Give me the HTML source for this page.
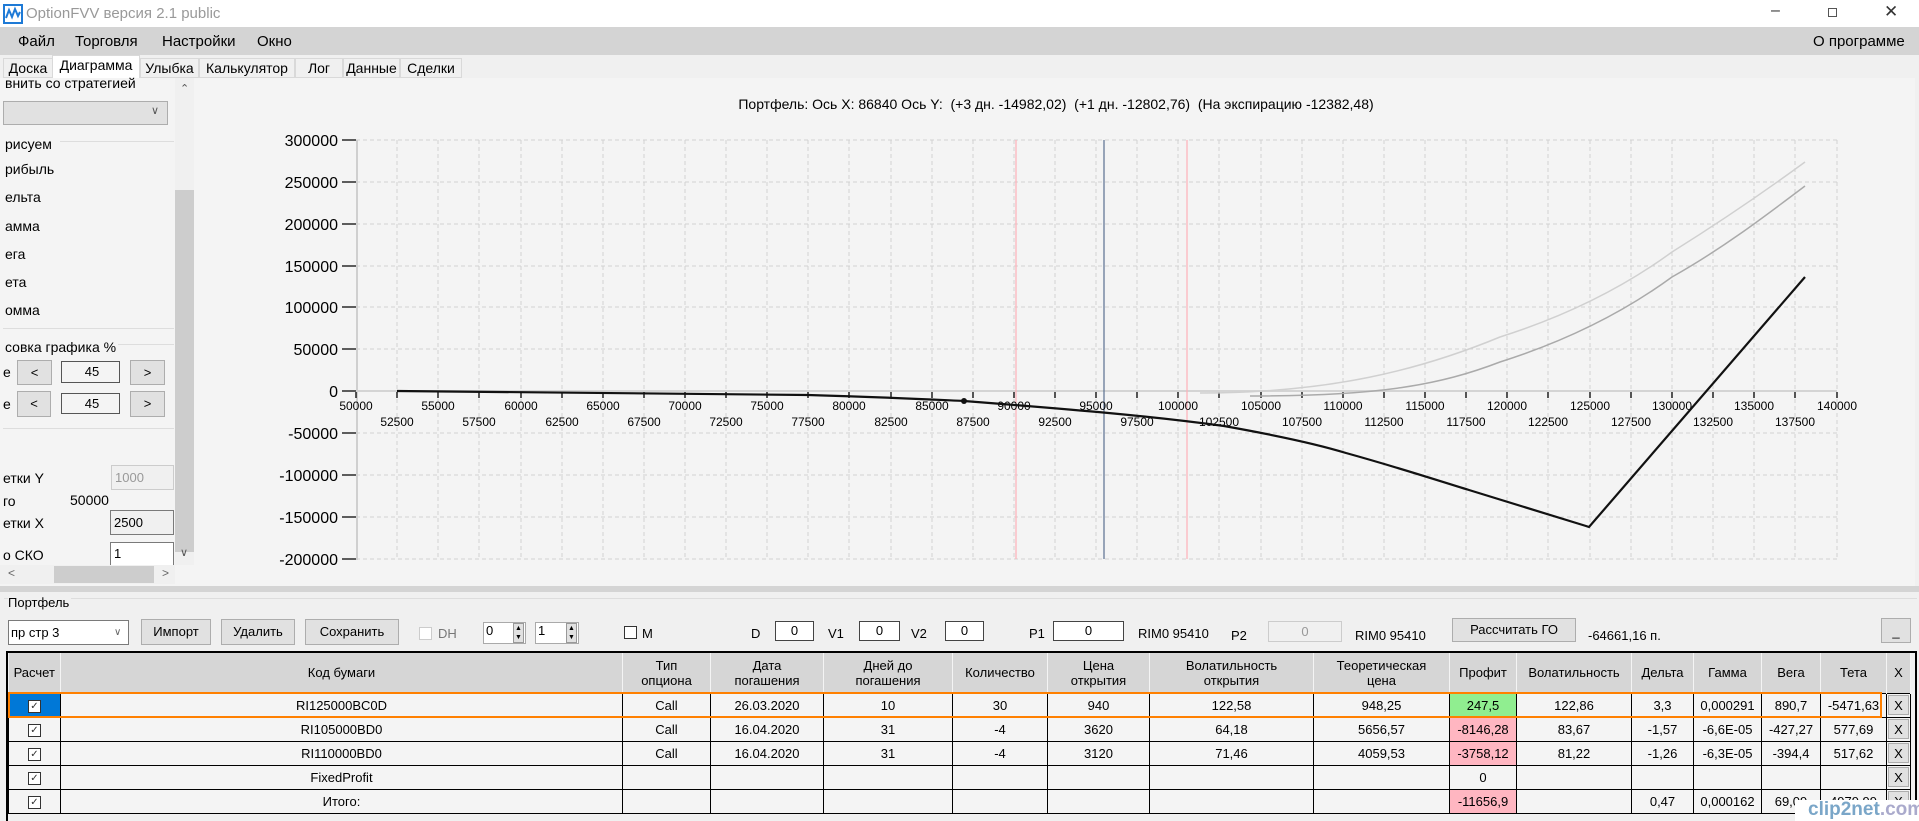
<!DOCTYPE html>
<html><head><meta charset="utf-8"><style>
*{box-sizing:border-box;margin:0;padding:0}
body{width:1919px;height:821px;overflow:hidden;background:#f0f0f0;font-family:"Liberation Sans",sans-serif;font-size:13px;color:#000;position:relative}
.a{position:absolute;white-space:nowrap}
.btn{position:absolute;background:#e1e1e1;border:1px solid #adadad;text-align:center;font-size:13px}
.box{position:absolute;background:#fff;border:1px solid #7a7a7a;font-size:13px;padding-left:3px}
table{position:absolute;left:8px;top:653px;border-collapse:collapse;table-layout:fixed;font-size:13px}
td{border:1px solid #000;text-align:center;height:24px;background:#f4f4f4;overflow:hidden;white-space:nowrap}
th{background:#d6d6d6;font-weight:normal;border-right:1px solid #f4f4f4;height:40px;line-height:15px;font-size:13px}
.cb{display:inline-block;width:13px;height:13px;border:1px solid #333;background:#fff;font-size:10px;line-height:11px;color:#333}
.g{background:#90ee90}.p{background:#ffb6c1}
.x{background:#e1e1e1;border:1px solid #adadad;display:block;margin:1px;height:20px;line-height:20px}
.tab{position:absolute;top:58px;height:20px;border:1px solid #d9d9d9;background:#f0f0f0;text-align:center;line-height:19px;font-size:14px}
</style></head><body>
<div class="a" style="left:0;top:0;width:1919px;height:27px;background:#fff"></div>
<svg class="a" style="left:3px;top:4px" width="20" height="20" viewBox="0 0 20 20"><rect x="1" y="1" width="18" height="18" fill="none" stroke="#1e7ad6" stroke-width="2"/><path d="M3 14 L6 6 L9 13 L12 5 L15 12 L17 8" fill="none" stroke="#1e7ad6" stroke-width="2"/></svg>
<div class="a" style="left:26px;top:5px;font-size:15px;color:#999">OptionFVV версия 2.1 public</div>
<div class="a" style="left:1771px;top:2px;font-size:16px;color:#333">&#8211;</div>
<div class="a" style="left:1828px;top:8px;width:9px;height:9px;border:1px solid #555"></div>
<div class="a" style="left:1884px;top:2px;font-size:17px;color:#333">&#10005;</div>
<div class="a" style="left:0;top:27px;width:1919px;height:28px;background:#d4d4d4"></div>
<div class="a" style="left:18px;top:33px;font-size:15px">Файл</div>
<div class="a" style="left:75px;top:33px;font-size:15px">Торговля</div>
<div class="a" style="left:162px;top:33px;font-size:15px">Настройки</div>
<div class="a" style="left:257px;top:33px;font-size:15px">Окно</div>
<div class="a" style="left:1813px;top:33px;font-size:15px">О программе</div>
<div class="tab" style="left:3px;width:50px">Доска</div>
<div class="tab" style="left:52px;width:88px;top:55px;height:24px;background:#fff;border-bottom:none">Диаграмма</div>
<div class="tab" style="left:140px;width:59px">Улыбка</div>
<div class="tab" style="left:199px;width:96px">Калькулятор</div>
<div class="tab" style="left:295px;width:48px">Лог</div>
<div class="tab" style="left:343px;width:57px">Данные</div>
<div class="tab" style="left:400px;width:62px">Сделки</div>
<div class="a" style="left:0;top:78px;width:194px;height:508px;background:#f4f4f4"></div>
<div class="a" style="left:175px;top:78px;width:19px;height:487px;background:#f0f0f0"></div>
<div class="a" style="left:175px;top:190px;width:19px;height:362px;background:#cdcdcd"></div>
<div class="a" style="left:180px;top:82px;font-size:11px;color:#555">&#8963;</div>
<div class="a" style="left:5px;top:75px;font-size:14px">внить со стратегией</div>
<div class="a" style="left:3px;top:101px;width:165px;height:24px;background:#e1e1e1;border:1px solid #adadad"></div>
<div class="a" style="left:151px;top:104px;font-size:11px;color:#555">&#8744;</div>
<div class="a" style="left:60px;top:141px;width:114px;height:1px;background:#ddd"></div>
<div class="a" style="left:5px;top:136px;font-size:14px">рисуем</div>
<div class="a" style="left:5px;top:161px;font-size:14px">рибыль</div>
<div class="a" style="left:5px;top:189px;font-size:14px">ельта</div>
<div class="a" style="left:5px;top:218px;font-size:14px">амма</div>
<div class="a" style="left:5px;top:246px;font-size:14px">ега</div>
<div class="a" style="left:5px;top:274px;font-size:14px">ета</div>
<div class="a" style="left:5px;top:302px;font-size:14px">омма</div>
<div class="a" style="left:3px;top:328px;width:171px;height:1px;background:#ddd"></div>
<div class="a" style="left:5px;top:339px;font-size:14px">совка графика %</div>
<div class="a" style="left:118px;top:344px;width:56px;height:1px;background:#ddd"></div>
<div class="a" style="left:3px;top:364px;font-size:14px">е</div>
<div class="btn" style="left:17px;top:360px;width:35px;height:25px;line-height:23px">&lt;</div>
<div class="box" style="left:61px;top:361px;width:59px;height:22px;text-align:center;line-height:20px;background:#f4f4f4;border-color:#555">45</div>
<div class="btn" style="left:130px;top:360px;width:35px;height:25px;line-height:23px">&gt;</div>
<div class="a" style="left:3px;top:396px;font-size:14px">е</div>
<div class="btn" style="left:17px;top:391px;width:34px;height:26px;line-height:24px">&lt;</div>
<div class="box" style="left:61px;top:393px;width:59px;height:21px;text-align:center;line-height:19px;background:#f4f4f4;border-color:#555">45</div>
<div class="btn" style="left:130px;top:391px;width:35px;height:26px;line-height:24px">&gt;</div>
<div class="a" style="left:3px;top:428px;width:171px;height:1px;background:#ddd"></div>
<div class="a" style="left:3px;top:470px;font-size:14px">етки Y</div>
<div class="box" style="left:111px;top:465px;width:63px;height:25px;line-height:23px;color:#999;border-color:#ccc;background:#f0f0f0">1000</div>
<div class="a" style="left:3px;top:493px;font-size:14px">го</div>
<div class="a" style="left:70px;top:492px;font-size:14px">50000</div>
<div class="a" style="left:3px;top:515px;font-size:14px">етки X</div>
<div class="box" style="left:110px;top:510px;width:64px;height:25px;line-height:23px;background:#f0f0f0">2500</div>
<div class="a" style="left:3px;top:547px;font-size:14px">о СКО</div>
<div class="box" style="left:110px;top:542px;width:64px;height:24px;line-height:22px">1</div>
<div class="a" style="left:180px;top:546px;font-size:11px;color:#555">&#8744;</div>
<div class="a" style="left:0;top:565px;width:175px;height:19px;background:#f0f0f0"></div>
<div class="a" style="left:54px;top:566px;width:100px;height:17px;background:#cdcdcd"></div>
<div class="a" style="left:8px;top:566px;font-size:12px;color:#666">&lt;</div>
<div class="a" style="left:162px;top:566px;font-size:12px;color:#666">&gt;</div>
<svg class="a" style="left:0;top:0" width="1919" height="821">
<rect x="194" y="78" width="1721" height="508" fill="#f4f4f4"/>
<g stroke="#d2d2d2" stroke-width="1" stroke-dasharray="4,3" fill="none">
<path d="M356 140H1837M356 182H1837M356 224H1837M356 266H1837M356 307H1837M356 349H1837M356 433H1837M356 475H1837M356 517H1837M356 559H1837"/>
</g>
<g stroke="#d2d2d2" stroke-width="1" stroke-dasharray="4,3">
<line x1="397" y1="140" x2="397" y2="559"/><line x1="438" y1="140" x2="438" y2="559"/><line x1="479" y1="140" x2="479" y2="559"/><line x1="521" y1="140" x2="521" y2="559"/><line x1="562" y1="140" x2="562" y2="559"/><line x1="603" y1="140" x2="603" y2="559"/><line x1="644" y1="140" x2="644" y2="559"/><line x1="685" y1="140" x2="685" y2="559"/><line x1="726" y1="140" x2="726" y2="559"/><line x1="767" y1="140" x2="767" y2="559"/><line x1="808" y1="140" x2="808" y2="559"/><line x1="849" y1="140" x2="849" y2="559"/><line x1="891" y1="140" x2="891" y2="559"/><line x1="932" y1="140" x2="932" y2="559"/><line x1="973" y1="140" x2="973" y2="559"/><line x1="1014" y1="140" x2="1014" y2="559"/><line x1="1055" y1="140" x2="1055" y2="559"/><line x1="1096" y1="140" x2="1096" y2="559"/><line x1="1137" y1="140" x2="1137" y2="559"/><line x1="1178" y1="140" x2="1178" y2="559"/><line x1="1219" y1="140" x2="1219" y2="559"/><line x1="1261" y1="140" x2="1261" y2="559"/><line x1="1302" y1="140" x2="1302" y2="559"/><line x1="1343" y1="140" x2="1343" y2="559"/><line x1="1384" y1="140" x2="1384" y2="559"/><line x1="1425" y1="140" x2="1425" y2="559"/><line x1="1466" y1="140" x2="1466" y2="559"/><line x1="1507" y1="140" x2="1507" y2="559"/><line x1="1548" y1="140" x2="1548" y2="559"/><line x1="1590" y1="140" x2="1590" y2="559"/><line x1="1631" y1="140" x2="1631" y2="559"/><line x1="1672" y1="140" x2="1672" y2="559"/><line x1="1713" y1="140" x2="1713" y2="559"/><line x1="1754" y1="140" x2="1754" y2="559"/><line x1="1795" y1="140" x2="1795" y2="559"/><line x1="1837" y1="140" x2="1837" y2="559"/>
</g>
<line x1="357" y1="140" x2="357" y2="560" stroke="#cfcfcf" stroke-width="2"/>
<line x1="356" y1="391" x2="1837" y2="391" stroke="#d4d4d4" stroke-width="2"/>
<g stroke="#000" stroke-width="1.3">
<path d="M342 140h14M342 182h14M342 224h14M342 266h14M342 307h14M342 349h14M342 391h14M342 433h14M342 475h14M342 517h14M342 559h14"/>
<path d="M356 392v6M397 392v6M438 392v6M479 392v6M521 392v6M562 392v6M603 392v6M644 392v6M685 392v6M726 392v6M767 392v6M808 392v6M849 392v6M891 392v6M932 392v6M973 392v6M1014 392v6M1055 392v6M1096 392v6M1137 392v6M1178 392v6M1219 392v6M1261 392v6M1302 392v6M1343 392v6M1384 392v6M1425 392v6M1466 392v6M1507 392v6M1548 392v6M1590 392v6M1631 392v6M1672 392v6M1713 392v6M1754 392v6M1795 392v6M1837 392v6"/>
</g>
<line x1="1016" y1="140" x2="1016" y2="559" stroke="#ffb0b8" stroke-width="1.2"/>
<line x1="1187" y1="140" x2="1187" y2="559" stroke="#ffb0b8" stroke-width="1.2"/>
<line x1="1104" y1="140" x2="1104" y2="559" stroke="#5a7090" stroke-width="1.2"/>
<g font-family="Liberation Sans" font-size="16" text-anchor="end" fill="#000">
<text x="338" y="146">300000</text><text x="338" y="188">250000</text><text x="338" y="230">200000</text><text x="338" y="272">150000</text><text x="338" y="313">100000</text><text x="338" y="355">50000</text><text x="338" y="397">0</text><text x="338" y="439">-50000</text><text x="338" y="481">-100000</text><text x="338" y="523">-150000</text><text x="338" y="565">-200000</text>
</g>
<g font-family="Liberation Sans" font-size="12" text-anchor="middle" fill="#000">
<text x="356" y="410">50000</text><text x="438" y="410">55000</text><text x="521" y="410">60000</text><text x="603" y="410">65000</text><text x="685" y="410">70000</text><text x="767" y="410">75000</text><text x="849" y="410">80000</text><text x="932" y="410">85000</text><text x="1014" y="410">90000</text><text x="1096" y="410">95000</text><text x="1178" y="410">100000</text><text x="1261" y="410">105000</text><text x="1343" y="410">110000</text><text x="1425" y="410">115000</text><text x="1507" y="410">120000</text><text x="1590" y="410">125000</text><text x="1672" y="410">130000</text><text x="1754" y="410">135000</text><text x="1837" y="410">140000</text>
<text x="397" y="426">52500</text><text x="479" y="426">57500</text><text x="562" y="426">62500</text><text x="644" y="426">67500</text><text x="726" y="426">72500</text><text x="808" y="426">77500</text><text x="891" y="426">82500</text><text x="973" y="426">87500</text><text x="1055" y="426">92500</text><text x="1137" y="426">97500</text><text x="1219" y="426">102500</text><text x="1302" y="426">107500</text><text x="1384" y="426">112500</text><text x="1466" y="426">117500</text><text x="1548" y="426">122500</text><text x="1631" y="426">127500</text><text x="1713" y="426">132500</text><text x="1795" y="426">137500</text>
</g>
<path d="M1200 393 C1330 393 1420 370 1500 337 C1560 318 1620 290 1672 252 C1720 222 1760 195 1805 162" fill="none" stroke="#d0d0d0" stroke-width="1.5"/>
<path d="M1250 396 C1380 396 1440 385 1500 362 C1560 343 1620 315 1672 277 C1720 250 1760 220 1805 186" fill="none" stroke="#aaa" stroke-width="1.5"/>
<path d="M397 391 L808 395 C880 397 920 399 964 401 C1080 410 1150 416 1224 426 C1280 436 1320 445 1346 453 C1400 468 1430 478 1469 490 L1586 526 L1589 527 L1805 277" fill="none" stroke="#111" stroke-width="2.2"/>
<circle cx="964" cy="401" r="3" fill="#111"/>
<text x="1056" y="109" font-family="Liberation Sans" font-size="14" text-anchor="middle" xml:space="preserve">Портфель: Ось X: 86840 Ось Y:  (+3 дн. -14982,02)  (+1 дн. -12802,76)  (На экспирацию -12382,48)</text>
</svg>
<div class="a" style="left:0;top:586px;width:1919px;height:6px;background:#d4d4d4"></div>
<div class="a" style="left:4px;top:598px;width:1913px;height:1px;background:#ddd"></div>
<div class="a" style="left:8px;top:595px;font-size:13px;background:#f0f0f0;padding-right:2px">Портфель</div>
<div class="a" style="left:8px;top:620px;width:121px;height:25px;background:#fff;border:1px solid #7a7a7a;line-height:23px;padding-left:2px">пр стр 3<span style="position:absolute;left:105px;font-size:10px;color:#666">&#8744;</span></div>
<div class="btn" style="left:141px;top:619px;width:70px;height:26px;line-height:24px">Импорт</div>
<div class="btn" style="left:221px;top:619px;width:74px;height:26px;line-height:24px">Удалить</div>
<div class="btn" style="left:305px;top:619px;width:94px;height:26px;line-height:24px">Сохранить</div>
<div class="a" style="left:419px;top:627px;width:13px;height:13px;border:1px solid #ccc;background:#fff"></div>
<div class="a" style="left:438px;top:626px;color:#777">DH</div>
<div class="a" style="left:483px;top:622px;width:43px;height:22px;border:1px solid #aaa;background:#fff;padding-left:2px">0</div>
<div class="a" style="left:513px;top:623px;width:11px;height:20px;background:#e1e1e1;border:1px solid #999;font-size:7px;line-height:9px;text-align:center">▲<br>▼</div>
<div class="a" style="left:535px;top:622px;width:44px;height:22px;border:1px solid #aaa;background:#fff;padding-left:2px">1</div>
<div class="a" style="left:566px;top:623px;width:11px;height:20px;background:#e1e1e1;border:1px solid #999;font-size:7px;line-height:9px;text-align:center">▲<br>▼</div>
<div class="a" style="left:624px;top:626px;width:13px;height:13px;border:1px solid #333;background:#fff"></div>
<div class="a" style="left:642px;top:626px">M</div>
<div class="a" style="left:751px;top:626px">D</div>
<div class="box" style="left:775px;top:621px;width:39px;height:20px;text-align:center;line-height:18px;border-color:#444;padding:0">0</div>
<div class="a" style="left:828px;top:626px">V1</div>
<div class="box" style="left:859px;top:621px;width:41px;height:20px;text-align:center;line-height:18px;border-color:#444;padding:0">0</div>
<div class="a" style="left:911px;top:626px">V2</div>
<div class="box" style="left:945px;top:621px;width:39px;height:20px;text-align:center;line-height:18px;border-color:#444;padding:0">0</div>
<div class="a" style="left:1029px;top:626px">P1</div>
<div class="box" style="left:1053px;top:621px;width:71px;height:20px;text-align:center;line-height:18px;border-color:#444;padding:0">0</div>
<div class="a" style="left:1138px;top:626px">RIM0 95410</div>
<div class="a" style="left:1231px;top:628px">P2</div>
<div class="box" style="left:1268px;top:621px;width:74px;height:21px;text-align:center;line-height:19px;border-color:#ccc;color:#999;background:#f0f0f0;padding:0">0</div>
<div class="a" style="left:1355px;top:628px">RIM0 95410</div>
<div class="btn" style="left:1452px;top:618px;width:124px;height:24px;line-height:22px">Рассчитать ГО</div>
<div class="a" style="left:1588px;top:628px">-64661,16 п.</div>
<div class="btn" style="left:1881px;top:618px;width:30px;height:25px;line-height:26px">_</div>
<div class="a" style="left:6px;top:651px;width:1911px;height:170px;border:2px solid #000;border-bottom:none;background:#f0f0f0"></div>
<table>
<colgroup><col style="width:52px"><col style="width:562px"><col style="width:88px"><col style="width:113px"><col style="width:129px"><col style="width:95px"><col style="width:102px"><col style="width:164px"><col style="width:136px"><col style="width:67px"><col style="width:115px"><col style="width:62px"><col style="width:68px"><col style="width:59px"><col style="width:66px"><col style="width:24px"></colgroup>
<tr><th>Расчет</th><th>Код бумаги</th><th>Тип<br>опциона</th><th>Дата<br>погашения</th><th>Дней до<br>погашения</th><th>Количество</th><th>Цена<br>открытия</th><th>Волатильность<br>открытия</th><th>Теоретическая<br>цена</th><th>Профит</th><th>Волатильность</th><th>Дельта</th><th>Гамма</th><th>Вега</th><th>Тета</th><th>X</th></tr>
<tr><td style="background:#0078d7"><span class="cb">✓</span></td><td>RI125000BC0D</td><td>Call</td><td>26.03.2020</td><td>10</td><td>30</td><td>940</td><td>122,58</td><td>948,25</td><td class="g">247,5</td><td>122,86</td><td>3,3</td><td>0,000291</td><td>890,7</td><td>-5471,63</td><td style="padding:0"><span class="x">X</span></td></tr>
<tr><td><span class="cb">✓</span></td><td>RI105000BD0</td><td>Call</td><td>16.04.2020</td><td>31</td><td>-4</td><td>3620</td><td>64,18</td><td>5656,57</td><td class="p">-8146,28</td><td>83,67</td><td>-1,57</td><td>-6,6E-05</td><td>-427,27</td><td>577,69</td><td style="padding:0"><span class="x">X</span></td></tr>
<tr><td><span class="cb">✓</span></td><td>RI110000BD0</td><td>Call</td><td>16.04.2020</td><td>31</td><td>-4</td><td>3120</td><td>71,46</td><td>4059,53</td><td class="p">-3758,12</td><td>81,22</td><td>-1,26</td><td>-6,3E-05</td><td>-394,4</td><td>517,62</td><td style="padding:0"><span class="x">X</span></td></tr>
<tr><td><span class="cb">✓</span></td><td>FixedProfit</td><td></td><td></td><td></td><td></td><td></td><td></td><td></td><td>0</td><td></td><td></td><td></td><td></td><td></td><td style="padding:0"><span class="x">X</span></td></tr>
<tr><td><span class="cb">✓</span></td><td>Итого:</td><td></td><td></td><td></td><td></td><td></td><td></td><td></td><td class="p">-11656,9</td><td></td><td>0,47</td><td>0,000162</td><td>69,09</td><td>4979,99</td><td style="padding:0"><span class="x">X</span></td></tr>
</table>
<div class="a" style="left:8px;top:692px;width:1874px;height:26px;border:2px solid #ff8000"></div>
<div class="a" style="left:1795px;top:800px;width:124px;height:21px;background:#fff"></div>
<div class="a" style="left:1808px;top:799px;font-size:19px;font-weight:bold;color:#7aa6c8">clip2net<span style="color:#aac">.com</span></div>
</body></html>
